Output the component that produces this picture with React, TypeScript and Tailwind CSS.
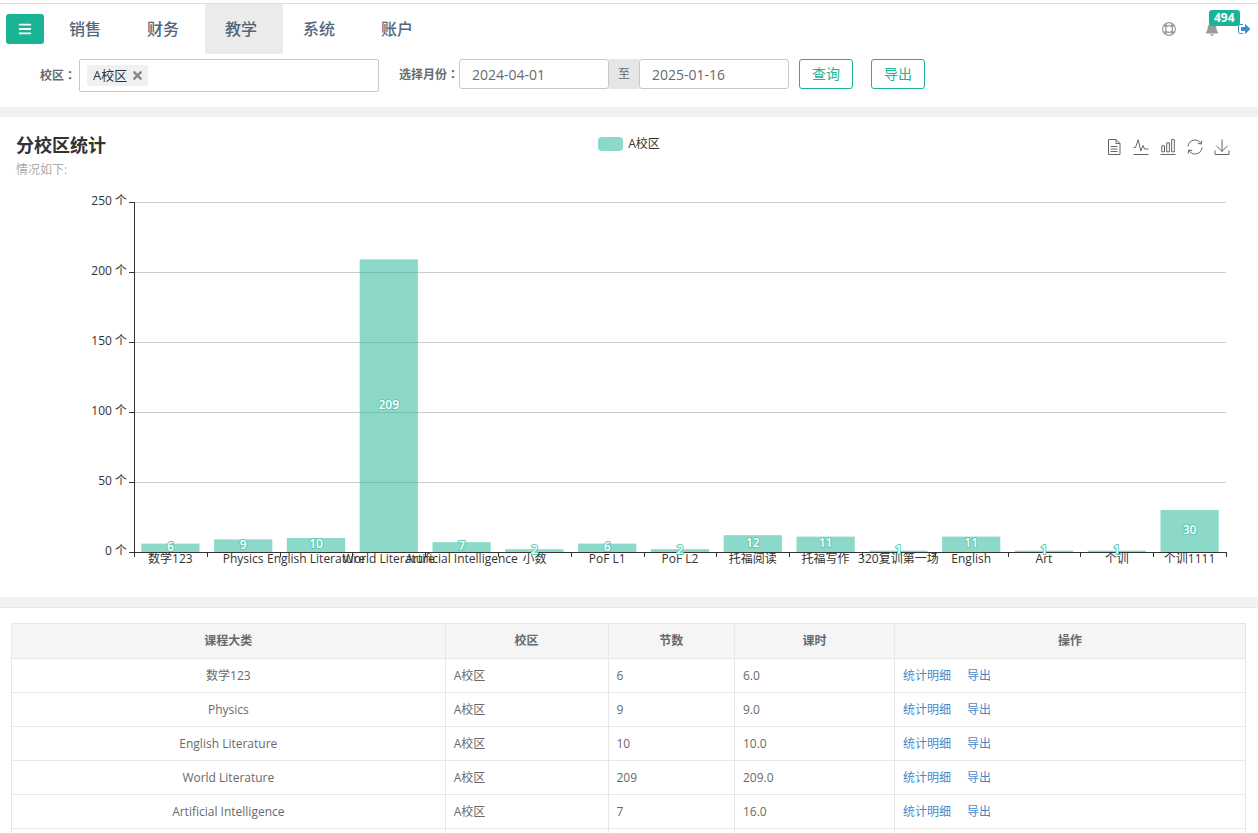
import type { ReactNode } from "react";
import { FaBars, FaBell, FaTimes } from "react-icons/fa";

const menus = ["销售", "财务", "教学", "系统", "账户"];

const stats = [
    { name: "数学123", count: 6 },
    { name: "Physics", count: 9 },
    { name: "English Literature", count: 10 },
    { name: "World Literature", count: 209 },
    { name: "Artificial Intelligence", count: 7 },
    { name: "小数", count: 2 },
    { name: "PoF L1", count: 6 },
    { name: "PoF L2", count: 2 },
    { name: "托福阅读", count: 12 },
    { name: "托福写作", count: 11 },
    { name: "320复训第一场", count: 1 },
    { name: "English", count: 11 },
    { name: "Art", count: 1 },
    { name: "个训", count: 1 },
    { name: "个训1111", count: 30 },
];

const rows = [
    { name: "数学123", campus: "A校区", count: 6, hours: "6.0" },
    { name: "Physics", campus: "A校区", count: 9, hours: "9.0" },
    { name: "English Literature", campus: "A校区", count: 10, hours: "10.0" },
    { name: "World Literature", campus: "A校区", count: 209, hours: "209.0" },
    { name: "Artificial Intelligence", campus: "A校区", count: 7, hours: "16.0" },
    { name: "小数", campus: "A校区", count: 2, hours: "2.0" },
];

const yTicks = [0, 50, 100, 150, 200, 250];

function LifeRing() {
    return (
        <svg viewBox="0 0 14 14" className="w-3.5 h-3.5" fill="none" stroke="currentColor">
            <circle cx="7" cy="7" r="6.4" strokeWidth="1.2" />
            <circle cx="7" cy="7" r="3.4" strokeWidth="1.2" />
            <path d="M2.8 2.8l1.8 1.8M11.2 2.8L9.4 4.6M2.8 11.2l1.8-1.8M11.2 11.2L9.4 9.4" strokeWidth="3" />
        </svg>
    );
}

function SignOut() {
    return (
        <svg viewBox="0 0 1792 1792" className="w-3.5 h-3.5" fill="currentColor">
            <path d="M640 1440q0 4 1 20t.5 26.5-3 23.5-10 19.5-20.5 6.5h-320q-119 0-203.5-84.5t-84.5-203.5v-704q0-119 84.5-203.5t203.5-84.5h320q13 0 22.5 9.5t9.5 22.5q0 4 1 20t.5 26.5-3 23.5-10 19.5-20.5 6.5h-320q-66 0-113 47t-47 113v704q0 66 47 113t113 47h312l11.5 1 11.5 3 8 5.5 7 9 2 13.5zm928-544q0 26-19 45l-544 544q-19 19-45 19t-45-19-19-45v-288h-448q-26 0-45-19t-19-45v-384q0-26 19-45t45-19h448v-288q0-26 19-45t45-19 45 19l544 544q19 19 19 45z" />
        </svg>
    );
}

function ToolButton({ label, children }: { label: string; children: ReactNode }) {
    return (
        <button type="button" aria-label={label} className="text-[#666]">
            <svg viewBox="0 0 16 16" className="w-4 h-4" fill="none" stroke="currentColor">
                {children}
            </svg>
        </button>
    );
}

// Full-width colon, centred in its cell
function Colon() {
    return <span className="font-['Noto_Sans_CJK_TC',sans-serif]">：</span>;
}

function Header() {
    return (
        <header className="flex items-center border-t border-[#ddd] mt-[3px] px-1.5">
            <button type="button" aria-label="菜单" className="w-[38px] h-[30px] flex items-center justify-center rounded-[3px] bg-[#1ab394] text-white">
                <FaBars className="w-3.5 h-3.5" />
            </button>
            <nav className="flex ml-[5px]">
                {menus.map((menu) => (
                    <a
                        key={menu}
                        href="#"
                        className={`h-[50px] pl-5 pr-[26px] text-[16px] leading-[50px] font-medium text-[#54667a] ${menu === "教学" ? "bg-[#ebebeb]" : ""}`}
                    >
                        {menu}
                    </a>
                ))}
            </nav>
            <div className="flex items-center ml-auto text-[#999c9e]">
                <a href="#" aria-label="帮助">
                    <LifeRing />
                </a>
                <a href="#" aria-label="通知" className="relative ml-[29px]">
                    <FaBell className="w-3.5 h-3.5" />
                    <span className="absolute left-1 -top-3 px-[5px] rounded-[3px] bg-[#1ab394] text-white text-[12px] leading-4 font-bold">
                        494
                    </span>
                </a>
                <a href="#" aria-label="退出" className="ml-[19px] text-[#428bca]">
                    <SignOut />
                </a>
            </div>
        </header>
    );
}

function Filters() {
    return (
        <form className="flex items-start pt-[5px] pb-[15px] pl-10">
            <label htmlFor="campus" className="mr-[3px] text-[12px] leading-8 font-bold">
                校区
                <Colon />
            </label>
            <div className="flex items-center w-[300px] h-[33px] px-[7px] border border-[#c8c8c8] rounded-[2px]">
                <span className="flex items-center gap-1 h-[21px] pl-1.5 pr-1 rounded-[2px] bg-[#f0f0f0] text-[13px] text-[#333]">
                    A校区
                    <button type="button" aria-label="移除" className="text-[#888]">
                        <FaTimes className="w-[13px] h-[13px]" />
                    </button>
                </span>
                <input id="campus" className="flex-1 min-w-0 h-full outline-none" />
            </div>
            <label htmlFor="start" className="ml-5 text-[12px] leading-[30px] font-bold">
                选择月份
                <Colon />
            </label>
            <input
                id="start"
                defaultValue="2024-04-01"
                className="w-[150px] h-[30px] px-3 border border-[#c8c8c8] rounded-[3px] text-[14px]"
            />
            <span className="w-[30px] h-[30px] bg-[#e5e6e7] text-center text-[12px] leading-[30px]">至</span>
            <input
                aria-label="结束日期"
                defaultValue="2025-01-16"
                className="w-[150px] h-[30px] px-3 border border-[#c8c8c8] rounded-[3px] text-[14px]"
            />
            <button type="submit" className="ml-2.5 w-[54px] h-[30px] border border-[#1ab394] rounded-[3px] text-[14px] leading-7 text-[#1ab394]">
                查询
            </button>
            <button type="button" className="ml-[18px] w-[54px] h-[30px] border border-[#1ab394] rounded-[3px] text-[14px] leading-7 text-[#1ab394]">
                导出
            </button>
        </form>
    );
}

function BarChart() {
    const left = 134;
    const right = 1226;
    const base = 367;
    const unit = 1.4;
    const step = (right - left) / stats.length;
    const barWidth = step * 0.8;

    return (
        <svg viewBox="0 0 1258 412" className="block w-full" role="img" aria-label="分校区统计">
            {/* Grid and y axis */}
            {yTicks.map((tick) => {
                const y = base - tick * unit;
                return (
                    <g key={tick}>
                        <path d={`M${left} ${y + 0.5}H${right}`} stroke="#ccc" />
                        <path d={`M${left - 5} ${y + 0.5}H${left}`} stroke="#333" />
                        <text x={left - 7} y={y + 3} textAnchor="end" fill="#333" className="text-[12px]">
                            {tick} 个
                        </text>
                    </g>
                );
            })}

            {/* Bars */}
            {stats.map((item, index) => (
                <rect
                    key={item.name}
                    x={left + step * index + (step - barWidth) / 2}
                    y={base - item.count * unit}
                    width={barWidth}
                    height={item.count * unit}
                    fill="#1ab394"
                    fillOpacity="0.5"
                />
            ))}

            {/* Axis lines */}
            <path d={`M${left + 0.5} 17V${base}M${left} ${base + 0.5}H${right + 1}`} stroke="#333" />
            {[...stats, null].map((_, index) => (
                <path key={index} d={`M${Math.round(left + step * index) + 0.5} ${base}v5`} stroke="#333" />
            ))}

            {/* Category names and values */}
            {stats.map((item, index) => {
                const center = left + step * (index + 0.5);
                return (
                    <g key={item.name} textAnchor="middle" className="text-[12px]">
                        <text x={center} y={base + 11} fill="#333">
                            {item.name}
                        </text>
                        <text
                            x={center}
                            y={base - (item.count * unit) / 2 + 3}
                            fill="#fff"
                            stroke="#5dc9b3"
                            strokeWidth="2"
                            strokeLinejoin="round"
                            paintOrder="stroke"
                            className="font-semibold"
                        >
                            {item.count}
                        </text>
                    </g>
                );
            })}
        </svg>
    );
}

function ChartPanel() {
    return (
        <section className="border-t-10 border-[#f2f2f2]">
            <div className="grid grid-cols-3 h-[68px] pl-4 pr-7 pt-4">
                <div>
                    <h2 className="text-[18px] leading-6 font-bold text-[#333]">分校区统计</h2>
                    <p className="text-[12px] leading-[26px] text-[#aaa]">情况如下:</p>
                </div>
                <button type="button" className="flex items-center justify-center gap-[5px] h-[21px] pl-3 text-[12px] text-[#333]">
                    <span className="w-[25px] h-3.5 rounded-[4px] bg-[#8cd9c9]" />
                    A校区
                </button>
                <div className="flex justify-end gap-[11px] h-7">
                    <ToolButton label="数据视图">
                        <path d="M2.5 .5h7.5l4 4v11H2.5zM10 .5v4h4M4.5 7.5h7M4.5 10h7M4.5 12.5h7" />
                    </ToolButton>
                    <ToolButton label="折线图">
                        <path d="M.5 8.5h2L5.2 .8 7.8 12 10 6.5l1.5 3.5h4M.5 15.5h15" />
                    </ToolButton>
                    <ToolButton label="柱状图">
                        <path d="M1.8 6.8h2.7v6H1.8zM6.7 3.8h2.7v9H6.7zM11.6 .6h2.7v12.2h-2.7zM.5 15.5h15" />
                    </ToolButton>
                    <ToolButton label="还原">
                        <path d="M1 7.5A7 7 0 0 1 14 4.5M15 8.5A7 7 0 0 1 2 11.5M14.8 1.5l-.6 3.6-3.4-.8M1.2 14.5l.6-3.6 3.4.8" />
                    </ToolButton>
                    <ToolButton label="保存为图片">
                        <path d="M8 .5v12M2.5 6.8L8 12.4l5.5-5.6M1 11.5v4h14v-4" />
                    </ToolButton>
                </div>
            </div>
            <BarChart />
        </section>
    );
}

function StatsTable() {
    return (
        <section className="border-t-10 border-[#f2f2f2]">
            <div className="border-t border-[#e7e7e7] pt-[15px] pl-[11px] pr-3">
                <table className="w-full table-fixed border-collapse text-[12px]">
                    <colgroup>
                        <col className="w-[35.14%]" />
                        <col className="w-[13.2%]" />
                        <col className="w-[10.25%]" />
                        <col className="w-[12.96%]" />
                        <col />
                    </colgroup>
                    <thead>
                        <tr className="h-[35px] bg-[#f5f5f6]">
                            {["课程大类", "校区", "节数", "课时", "操作"].map((title) => (
                                <th key={title} className="border border-[#e7e7e7] font-bold">
                                    {title}
                                </th>
                            ))}
                        </tr>
                    </thead>
                    <tbody>
                        {rows.map((row) => (
                            <tr key={row.name} className="h-[34px]">
                                <td className="border border-[#e7e7e7] px-2 text-center">{row.name}</td>
                                <td className="border border-[#e7e7e7] px-2">{row.campus}</td>
                                <td className="border border-[#e7e7e7] px-2">{row.count}</td>
                                <td className="border border-[#e7e7e7] px-2">{row.hours}</td>
                                <td className="border border-[#e7e7e7] px-2 text-[#428bca]">
                                    <a href="#">统计明细</a>
                                    <a href="#" className="ml-4">
                                        导出
                                    </a>
                                </td>
                            </tr>
                        ))}
                    </tbody>
                </table>
            </div>
        </section>
    );
}

export default function App() {
    return (
        <div className="h-screen overflow-hidden flow-root bg-white font-['Open_Sans','Noto_Sans_CJK_SC',sans-serif] text-[13px] text-[#676a6c]">
            <Header />
            <Filters />
            <ChartPanel />
            <StatsTable />
        </div>
    );
}
